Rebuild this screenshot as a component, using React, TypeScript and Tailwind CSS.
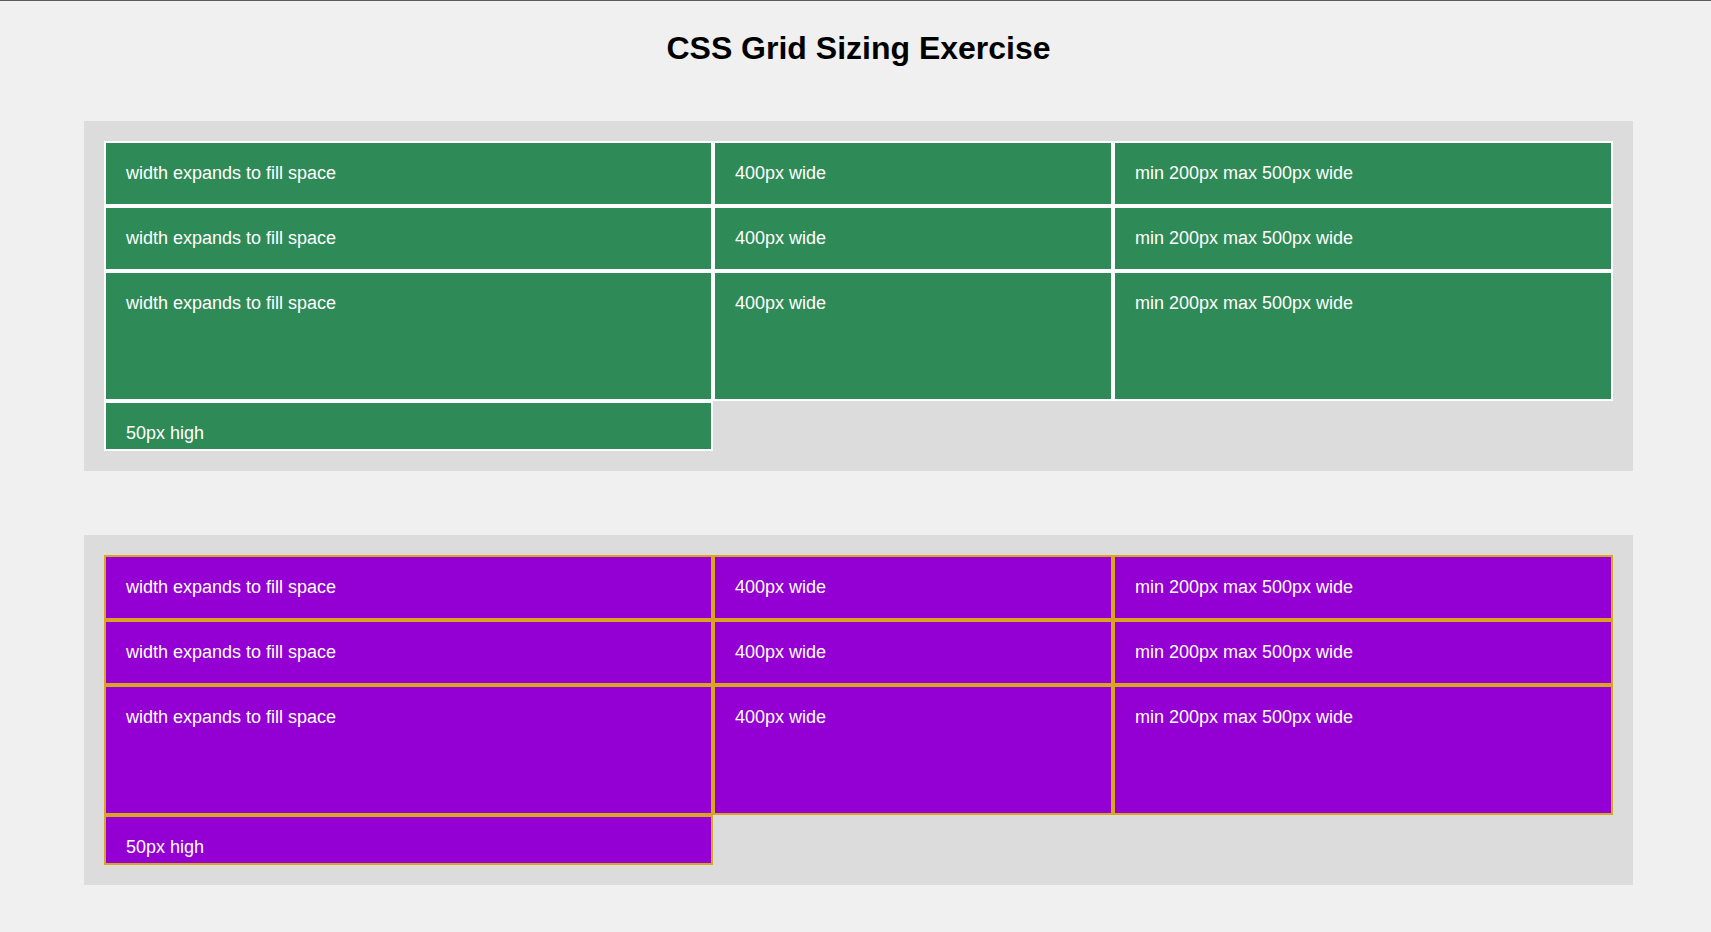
const ROWS = [0, 1, 2];

function SizingGrid({ cell }: { cell: string }) {
  return (
    <div className="grid grid-cols-[1fr_400px_minmax(200px,500px)] grid-rows-[auto_auto_130px_50px]">
      {ROWS.map((r) => (
        <div key={r} className="contents">
          <div className={`border-2 p-5 ${cell}`}>width expands to fill space</div>
          <div className={`border-2 p-5 ${cell}`}>400px wide</div>
          <div className={`border-2 p-5 ${cell}`}>min 200px max 500px wide</div>
        </div>
      ))}
      <div className={`border-2 p-5 ${cell}`}>50px high</div>
    </div>
  );
}

export default function App() {
  return (
    <div
      className="min-h-screen bg-[#f0f0f0] border-t border-[#5c5c5c] pt-[29px] pb-10 text-[18px] leading-[21px] text-white"
      style={{ fontFamily: '"Liberation Sans", Arial, sans-serif' }}
    >
      <h1 className="ml-[84px] w-[1549px] text-center text-[32px] leading-[37px] font-bold text-black">
        CSS Grid Sizing Exercise
      </h1>

      <div className="mt-[54px] ml-[84px] w-[1549px] bg-[#dcdcdc] p-5 h-[350px]">
        <SizingGrid cell="bg-[#2e8b57] border-white" />
      </div>

      <div className="mt-[64px] ml-[84px] w-[1549px] bg-[#dcdcdc] p-5 h-[350px]">
        <SizingGrid cell="bg-[#9400d3] border-[#daa520]" />
      </div>
    </div>
  );
}
